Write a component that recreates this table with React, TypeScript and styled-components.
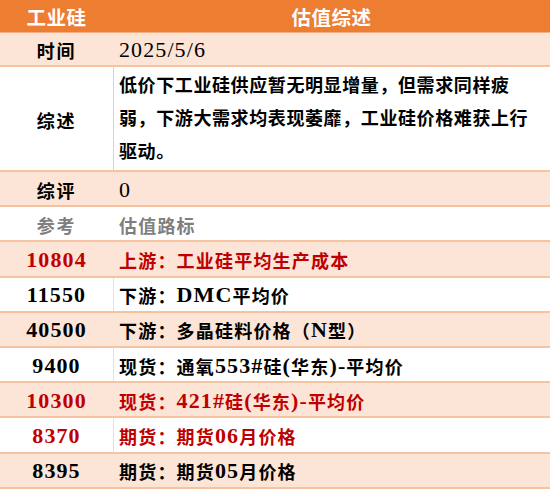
import React from 'react';
import styled, { createGlobalStyle } from 'styled-components';

const GlobalStyle = createGlobalStyle`
  html, body {
    margin: 0;
    padding: 0;
    background: #ffffff;
  }
  body {
    font-family: 'Liberation Serif', 'Noto Sans CJK SC', serif;
  }
`;

type Tone = 'normal' | 'red' | 'grey';
type Divider = 'grey' | 'peach' | 'none';

interface RowData {
  label: string;
  value: string;
  tone: Tone;
  shaded: boolean;
  divider: Divider;
  regular?: boolean;
}

const rows: RowData[] = [
  { label: '综评', value: '0', tone: 'normal', shaded: true, divider: 'none', regular: true },
  { label: '参考', value: '估值路标', tone: 'grey', shaded: false, divider: 'none' },
  { label: '10804', value: '上游：工业硅平均生产成本', tone: 'red', shaded: true, divider: 'none' },
  { label: '11550', value: '下游：DMC平均价', tone: 'normal', shaded: false, divider: 'grey' },
  { label: '40500', value: '下游：多晶硅料价格（N型）', tone: 'normal', shaded: true, divider: 'none' },
  { label: '9400', value: '现货：通氧553#硅(华东)-平均价', tone: 'normal', shaded: false, divider: 'grey' },
  { label: '10300', value: '现货：421#硅(华东)-平均价', tone: 'red', shaded: true, divider: 'none' },
  { label: '8370', value: '期货：期货06月价格', tone: 'red', shaded: false, divider: 'grey' },
  { label: '8395', value: '期货：期货05月价格', tone: 'normal', shaded: true, divider: 'none' },
];

const toneColor = (tone: Tone) =>
  tone === 'red' ? '#c00000' : tone === 'grey' ? '#7f7f7f' : '#000000';

const dividerColor = (d: Divider) =>
  d === 'grey' ? '#e2e2e2' : d === 'peach' ? '#f8cbad' : 'transparent';

// latin runs (digits, letters, brackets) are set larger, like the sheet's song font
const splitRuns = (text: string) =>
  text.split(/([\x20-\x7e]+)/).filter(Boolean).map((part, i) =>
    /^[\x20-\x7e]+$/.test(part) ? <Latin key={i}>{part}</Latin> : <span key={i}>{part}</span>
  );

function App() {
  return (
    <>
      <GlobalStyle />
      <Table>
        <HeaderRow>
          <HeaderCell>工业硅</HeaderCell>
          <HeaderCell>估值综述</HeaderCell>
        </HeaderRow>
        <Row $shaded $height={34}>
          <Label $tone="normal">时间</Label>
          <Value $tone="normal" $divider="none" $regular>
            {splitRuns('2025/5/6')}
          </Value>
        </Row>
        <Row $shaded={false} $height={105}>
          <Label $tone="normal">综述</Label>
          <Summary>
            低价下工业硅供应暂无明显增量，但需求同样疲
            <br />
            弱，下游大需求均表现萎靡，工业硅价格难获上行
            <br />
            驱动。
          </Summary>
        </Row>
        {rows.map((r) => (
          <Row key={r.label} $shaded={r.shaded} $height={35.2}>
            <Label $tone={r.tone}>{splitRuns(r.label)}</Label>
            <Value $tone={r.tone} $divider={r.divider} $regular={r.regular}>
              {splitRuns(r.value)}
            </Value>
          </Row>
        ))}
      </Table>
    </>
  );
}

export default App;

const Table = styled.div`
  width: 550px;
  display: flex;
  flex-direction: column;
`;

const HeaderRow = styled.div`
  display: grid;
  grid-template-columns: 113px 1fr;
  height: 33px;
  background: #ed7d31;
  border-bottom: 1px solid #f4b084;
  box-sizing: border-box;
`;

const HeaderCell = styled.div`
  display: flex;
  align-items: center;
  justify-content: center;
  color: #ffffff;
  font-size: 19.5px;
  font-weight: 700;
  letter-spacing: 0.5px;
`;

const Row = styled.div<{ $shaded: boolean; $height: number }>`
  display: grid;
  grid-template-columns: 113px 1fr;
  height: ${({ $height }) => $height}px;
  box-sizing: border-box;
  background: ${({ $shaded }) => ($shaded ? '#fce4d6' : '#ffffff')};
  border-bottom: 2px solid #f6c3a0;
`;

const Latin = styled.span`
  font-size: 22px;
  letter-spacing: 1.1px;
`;

const Label = styled.div<{ $tone: Tone }>`
  display: flex;
  align-items: center;
  justify-content: center;
  padding-top: 2px;
  font-size: 18px;
  font-weight: 700;
  letter-spacing: 1.8px;
  color: ${({ $tone }) => toneColor($tone)};
`;

const Value = styled.div<{ $tone: Tone; $divider: Divider; $regular?: boolean }>`
  display: flex;
  align-items: center;
  padding: 2px 0 0 5px;
  border-left: 1px solid ${({ $divider }) => dividerColor($divider)};
  font-size: 18px;
  font-weight: ${({ $regular }) => ($regular ? 400 : 700)};
  letter-spacing: 1.2px;
  color: ${({ $tone }) => toneColor($tone)};
  white-space: pre;
`;

const Summary = styled.div`
  padding: 3px 0 0 5px;
  border-left: 1px solid #f8cbad;
  font-size: 18px;
  font-weight: 700;
  line-height: 33px;
  letter-spacing: 0.6px;
  color: #000000;
  white-space: nowrap;
`;
